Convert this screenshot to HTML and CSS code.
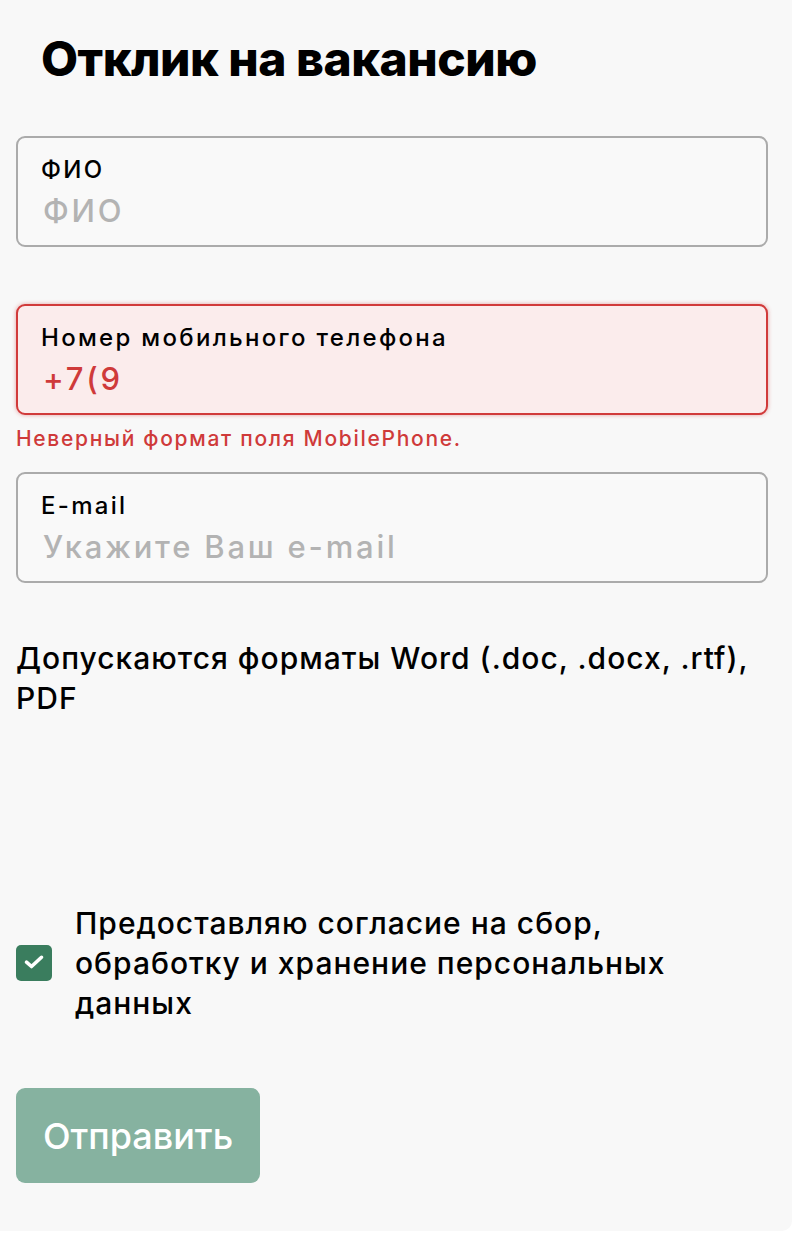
FILE: index.html
```html
<!DOCTYPE html>
<html lang="ru">
<head>
<meta charset="utf-8">
<title>Отклик на вакансию</title>
<link rel="stylesheet" href="styles.css">
</head>
<body>
<div class="card">
  <h1 class="title">Отклик на вакансию</h1>
  <form class="form">
    <label class="field">
      <span class="field-label">ФИО</span>
      <input class="field-input" type="text" placeholder="ФИО">
    </label>
    <label class="field field-error">
      <span class="field-label">Номер мобильного телефона</span>
      <input class="field-input" type="text" value="+7(9">
    </label>
    <div class="error-text">Неверный формат поля MobilePhone.</div>
    <label class="field field-email">
      <span class="field-label">E-mail</span>
      <input class="field-input" type="text" placeholder="Укажите Ваш e-mail">
    </label>
    <p class="formats">Допускаются форматы Word (.doc, .docx, .rtf), PDF</p>
    <div class="consent">
      <span class="checkbox">
        <svg width="36" height="36" viewBox="0 0 36 36"><path d="M10.5 17.2l5 4.3L25.5 12.3" fill="none" stroke="#fff" stroke-width="3.6" stroke-linecap="round" stroke-linejoin="round"/></svg>
      </span>
      <span class="consent-text">Предоставляю согласие на сбор, обработку и хранение персональных данных</span>
    </div>
    <button type="button" class="submit">Отправить</button>
  </form>
</div>
</body>
</html>
```
FILE: styles.css
```css
html, body {
  margin: 0;
  padding: 0;
  background: #ffffff;
}
body {
  font-family: Inter, "Noto Sans", sans-serif;
  color: #000;
}
.card {
  width: 792px;
  box-sizing: border-box;
  background: #f8f8f8;
  border-radius: 0 0 10px 0;
  padding: 30px 24px 48px 16px;
}
.title {
  margin: 0 0 0 25px;
  font-size: 48px;
  line-height: 58px;
  font-weight: 800;
  letter-spacing: -0.5px;
}
.form {
  display: flex;
  flex-direction: column;
  align-items: stretch;
  margin-top: 48px;
}
.field {
  display: flex;
  flex-direction: column;
  height: 111px;
  box-sizing: border-box;
  border: 2px solid #ababab;
  border-radius: 9px;
  padding: 18px 22px 0 23px;
  background: #f9f9f9;
}
.field + .field {
  margin-top: 57px;
}
.field-label {
  font-size: 24px;
  line-height: 27px;
  font-weight: 500;
  letter-spacing: 2.3px;
  color: #000;
}
.field-input {
  margin-top: 9px;
  border: none;
  outline: none;
  background: transparent;
  font-family: inherit;
  font-size: 31px;
  line-height: 37px;
  height: 37px;
  font-weight: 500;
  letter-spacing: 2.8px;
  padding: 0 0 0 2px;
  color: #000;
}
.field-input::placeholder {
  color: #b3b3b3;
  opacity: 1;
}
.field-error {
  border-color: #d13a3a;
  background: #fbecec;
  box-shadow: 0 0 4px rgba(209, 58, 58, 0.45);
}
.field-error .field-input {
  color: #cf3a3a;
}
.error-text {
  margin-top: 12px;
  font-size: 21px;
  line-height: 24px;
  font-weight: 500;
  letter-spacing: 1.7px;
  color: #cf3a3a;
}
.field-email {
  margin-top: 21px;
}
.formats {
  margin: 55px 0 0 0;
  font-size: 30px;
  line-height: 40px;
  font-weight: 500;
  letter-spacing: 1px;
}
.consent {
  margin-top: 185px;
  display: flex;
  align-items: center;
  gap: 23px;
}
.checkbox {
  flex: none;
  width: 36px;
  height: 36px;
  border-radius: 5px;
  background: #3a7d5e;
  display: flex;
  align-items: center;
  justify-content: center;
}
.consent-text {
  max-width: 630px;
  font-size: 30px;
  line-height: 40px;
  font-weight: 500;
  letter-spacing: 1px;
}
.submit {
  align-self: flex-start;
  margin-top: 65px;
  width: 244px;
  height: 95px;
  border: none;
  border-radius: 9px;
  background: #86b2a0;
  color: #fff;
  font-family: inherit;
  font-size: 36px;
  font-weight: 500;
  padding: 0;
}
```
